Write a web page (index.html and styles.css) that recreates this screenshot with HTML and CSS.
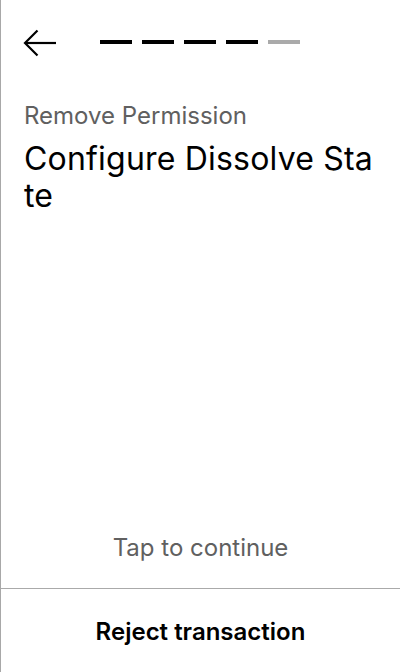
FILE: index.html
```html
<!DOCTYPE html>
<html>
<head>
<meta charset="utf-8">
<link rel="stylesheet" href="styles.css">
</head>
<body>
<div class="screen">
  <header class="top">
    <button class="back" aria-label="Back">
      <svg width="34" height="28" viewBox="0 0 34 28" fill="none" stroke="#000" stroke-width="2.2">
        <path d="M33 14H2"/>
        <path d="M14.5 1.5L2 14L14.5 26.5"/>
      </svg>
    </button>
    <div class="progress">
      <span class="step done"></span>
      <span class="step done"></span>
      <span class="step done"></span>
      <span class="step done"></span>
      <span class="step"></span>
    </div>
  </header>
  <main class="content">
    <div class="subtitle">Remove Permission</div>
    <h1 class="title">Configure Dissolve State</h1>
  </main>
  <div class="tap">Tap to continue</div>
  <footer class="footer">
    <button class="reject">Reject transaction</button>
  </footer>
</div>
</body>
</html>
```
FILE: styles.css
```css
* { box-sizing: border-box; }
html, body { margin: 0; padding: 0; background: #fff; }
body { font-family: Inter, "Noto Sans", sans-serif; color: #000; }
.screen {
  width: 400px;
  height: 672px;
  border-left: 1px solid #a8a8a8;
  display: flex;
  flex-direction: column;
}
.top {
  display: flex;
  align-items: flex-start;
  height: 84px;
  padding: 29px 23px 0;
  gap: 43px;
}
.back {
  width: 34px;
  height: 28px;
  padding: 0;
  border: 0;
  background: none;
  display: block;
  margin-left: -1px;
}
.back svg { display: block; }
.progress {
  display: flex;
  gap: 10px;
  margin-top: 11px;
}
.step {
  width: 32px;
  height: 4px;
  background: #aaa;
}
.step.done { background: #000; }
.content {
  flex: 1;
  padding: 17px 24px 0 23px;
}
.subtitle {
  font-size: 24px;
  line-height: 29px;
  color: #606060;
}
.title {
  margin: 10px 0 0;
  font-size: 32px;
  font-weight: 400;
  line-height: 37px;
  letter-spacing: 0.2px;
  word-break: break-all;
}
.tap {
  text-align: center;
  font-size: 24px;
  line-height: 29px;
  color: #606060;
  padding-bottom: 26px;
}
.footer {
  border-top: 1px solid #aaa;
  height: 84px;
  display: flex;
}
.reject {
  flex: 1;
  border: 0;
  background: none;
  font-family: Inter, "Noto Sans", sans-serif;
  font-size: 24px;
  line-height: 29px;
  font-weight: 600;
  color: #000;
  padding: 2px 0 0;
}
```
